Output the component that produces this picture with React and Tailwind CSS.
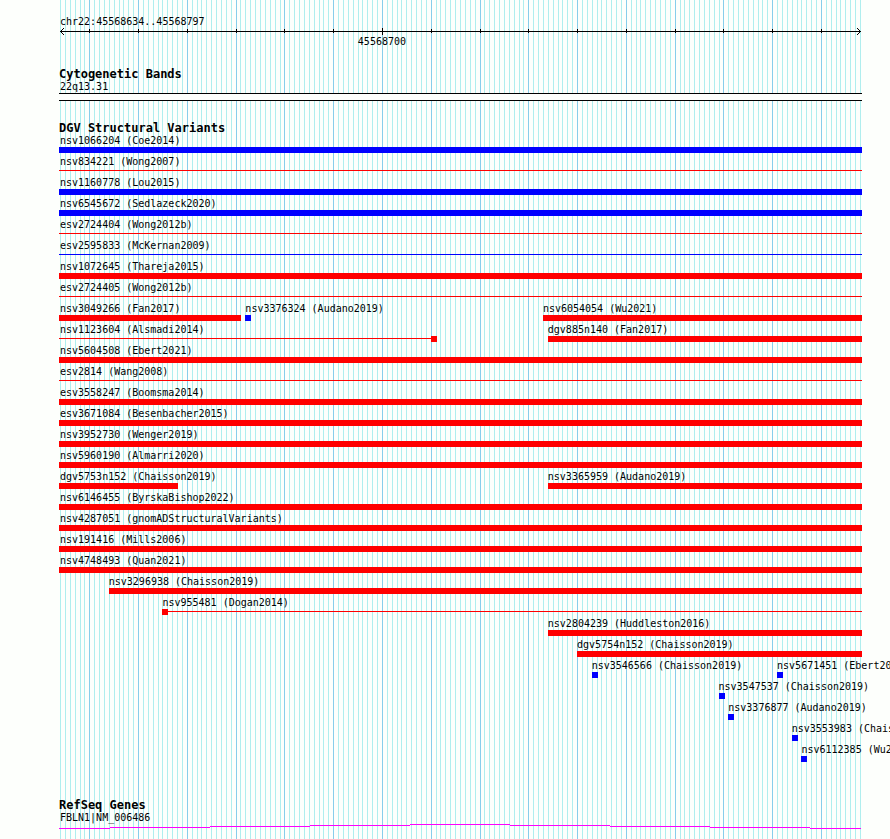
import React from "react";
import clsx from "clsx";

const REGION = { chrom: "chr22", start: 45568634, end: 45568797 };
const BASES = REGION.end - REGION.start + 1;

// bars run one base edge past the scale on both sides
const PLOT_WIDTH = 803;
const SCALE_WIDTH = 800;

// base offset -> percentage of the plot width
const pos = (base) => ((base * SCALE_WIDTH) / BASES + 1) * (100 / PLOT_WIDTH);
const pct = (n) => `${n}%`;

const isMajor = (base) => base % 10 === 6;

// type: bar (solid), line (thin), dot (single base)
const full = (label, color, type = "bar") => [{ label, color, type, from: 0 }];

const rows = [
  full("nsv1066204 (Coe2014)", "blue"),
  full("nsv834221 (Wong2007)", "red", "line"),
  full("nsv1160778 (Lou2015)", "blue"),
  full("nsv6545672 (Sedlazeck2020)", "blue"),
  full("esv2724404 (Wong2012b)", "red", "line"),
  full("esv2595833 (McKernan2009)", "blue", "line"),
  full("nsv1072645 (Thareja2015)", "red"),
  full("esv2724405 (Wong2012b)", "red", "line"),
  [
    { label: "nsv3049266 (Fan2017)", color: "red", type: "bar", from: 0, to: 37 },
    { label: "nsv3376324 (Audano2019)", color: "blue", type: "dot", from: 38 },
    { label: "nsv6054054 (Wu2021)", color: "red", type: "bar", from: 99 },
  ],
  [
    { label: "nsv1123604 (Alsmadi2014)", color: "red", type: "line", from: 0, to: 76, cap: "end" },
    { label: "dgv885n140 (Fan2017)", color: "red", type: "bar", from: 100 },
  ],
  full("nsv5604508 (Ebert2021)", "red"),
  full("esv2814 (Wang2008)", "red", "line"),
  full("esv3558247 (Boomsma2014)", "red"),
  full("esv3671084 (Besenbacher2015)", "red"),
  full("nsv3952730 (Wenger2019)", "red"),
  full("nsv5960190 (Almarri2020)", "red"),
  [
    { label: "dgv5753n152 (Chaisson2019)", color: "red", type: "bar", from: 0, to: 24 },
    { label: "nsv3365959 (Audano2019)", color: "red", type: "bar", from: 100 },
  ],
  full("nsv6146455 (ByrskaBishop2022)", "red"),
  full("nsv4287051 (gnomADStructuralVariants)", "red"),
  full("nsv191416 (Mills2006)", "red"),
  full("nsv4748493 (Quan2021)", "red"),
  [{ label: "nsv3296938 (Chaisson2019)", color: "red", type: "bar", from: 10 }],
  [{ label: "nsv955481 (Dogan2014)", color: "red", type: "line", from: 21, cap: "start" }],
  [{ label: "nsv2804239 (Huddleston2016)", color: "red", type: "bar", from: 100 }],
  [{ label: "dgv5754n152 (Chaisson2019)", color: "red", type: "bar", from: 106 }],
  [
    { label: "nsv3546566 (Chaisson2019)", color: "blue", type: "dot", from: 109 },
    { label: "nsv5671451 (Ebert2021)", color: "blue", type: "dot", from: 147 },
  ],
  [{ label: "nsv3547537 (Chaisson2019)", color: "blue", type: "dot", from: 135 }],
  [{ label: "nsv3376877 (Audano2019)", color: "blue", type: "dot", from: 137 }],
  [{ label: "nsv3553983 (Chaisson2019)", color: "blue", type: "dot", from: 150 }],
  [{ label: "nsv6112385 (Wu2021)", color: "blue", type: "dot", from: 152 }],
];

// [from x, to x, y] of each step of the intron hat
const hatSteps = [
  [0, 51, 4],
  [51, 151, 3],
  [151, 251, 2],
  [251, 351, 1],
  [351, 451, 0],
  [451, 551, 1],
  [551, 651, 2],
  [651, 751, 3],
  [751, 802, 4],
];

const App = () => {
  return (
    <div className="min-h-screen overflow-x-hidden bg-[#fdfffc] pl-[59px] pr-[28px] font-['DejaVu_Sans_Mono',monospace] text-[10px] leading-[13px] text-black">
      <main className="relative min-h-screen pt-[15px]">
        <GridLines />

        <div className="relative">
          <Ruler />

          {/* Cytogenetic bands */}
          <Track title="Cytogenetic Bands" className="mt-5">
            <p className="pl-px">22q13.31</p>
            <div className="h-2 border-y border-black bg-[#fdfffc]"></div>
          </Track>

          {/* Structural variants */}
          <Track title="DGV Structural Variants" className="mt-[21px]">
            {rows.map((features, i) => (
              <div key={i} className="grid h-[21px] grid-cols-1">
                {features.map((f) => (
                  <Feature key={f.label} {...f} />
                ))}
              </div>
            ))}
          </Track>

          {/* Genes */}
          <Track title="RefSeq Genes" className="mt-[35px]">
            <p className="pl-px">FBLN1|NM_006486</p>
            <svg className="block h-[6px] w-full" shapeRendering="crispEdges">
              {hatSteps.map(([x1, x2, y]) => (
                <rect
                  key={x1}
                  x={pct((x1 * 100) / PLOT_WIDTH)}
                  y={y}
                  width={pct(((x2 - x1) * 100) / PLOT_WIDTH)}
                  height="1"
                  fill="#ff00ff"
                />
              ))}
            </svg>
          </Track>
        </div>
      </main>
    </div>
  );
};

// Vertical line for every base, darker every ten
const GridLines = () => (
  <div className="absolute inset-0" aria-hidden="true">
    {[...Array(BASES + 1)].map((_, base) => (
      <div
        key={base}
        className={clsx("absolute inset-y-0 w-px", isMajor(base) ? "bg-[#87ceeb]" : "bg-[#afeeee]")}
        style={{ left: pct(pos(base)) }}
      ></div>
    ))}
  </div>
);

// Scale with arrow heads
const Ruler = () => (
  <div>
    <p className="pl-px">
      {REGION.chrom}:{REGION.start}..{REGION.end}
    </p>
    <svg className="block h-[7px] w-full overflow-visible" shapeRendering="crispEdges">
      <rect x={pct(pos(0))} y="3" width={pct(pos(BASES) - pos(0))} height="1" />
      {[...Array(BASES)].map((_, base) =>
        isMajor(base) ? (
          <rect
            key={base}
            x={pct(pos(base))}
            y={base === 66 ? 0 : 1}
            width="1"
            height={base === 66 ? 7 : 4}
          />
        ) : null
      )}
      <svg x={pct(pos(0))} overflow="visible">
        <path d="M0 3h1v1h-1zM1 2h1v1h-1zM2 1h1v1h-1zM3 0h1v1h-1zM1 4h1v1h-1zM2 5h1v1h-1zM3 6h1v1h-1z" />
      </svg>
      <svg x={pct(pos(BASES))} overflow="visible">
        <path d="M0 3h1v1h-1zM-1 2h1v1h-1zM-2 1h1v1h-1zM-3 0h1v1h-1zM-1 4h1v1h-1zM-2 5h1v1h-1zM-3 6h1v1h-1z" />
      </svg>
    </svg>
    <div className="flex" style={{ paddingLeft: pct(pos(66)) }}>
      <span className="-translate-x-1/2">{REGION.start + 66}</span>
    </div>
  </div>
);

const Track = ({ title, className, children }) => (
  <section className={className}>
    <h2 className="text-[12px] font-bold leading-[12px]">{title}</h2>
    {children}
  </section>
);

// Label with its glyph underneath
const Feature = ({ label, color, type, from, to, cap }) => {
  const left = from === 0 ? 0 : pos(from);
  // solid bars include the pixel of their end base
  const edge = type === "bar" ? 100 / PLOT_WIDTH : 0;
  const right = to ? pos(to) + edge : 100;
  const fill = color === "red" ? "bg-[#ff0000]" : "bg-[#0000ff]";

  return (
    <div className="col-start-1 row-start-1 min-w-0">
      <p className="whitespace-nowrap" style={{ paddingLeft: pct(pos(from)) }}>
        {label}
      </p>
      <div
        className="flex h-[6px]"
        style={{ marginLeft: pct(left), width: type === "dot" ? undefined : pct(right - left) }}
      >
        {cap === "start" && <span className={clsx("size-[6px] shrink-0", fill)}></span>}
        {type === "bar" && <span className={clsx("h-full flex-1", fill)}></span>}
        {type === "line" && <span className={clsx("mt-[2px] h-px flex-1", fill)}></span>}
        {type === "dot" && <span className={clsx("size-[6px]", fill)}></span>}
        {cap === "end" && <span className={clsx("-mr-[6px] size-[6px] shrink-0", fill)}></span>}
      </div>
    </div>
  );
};

export default App;
